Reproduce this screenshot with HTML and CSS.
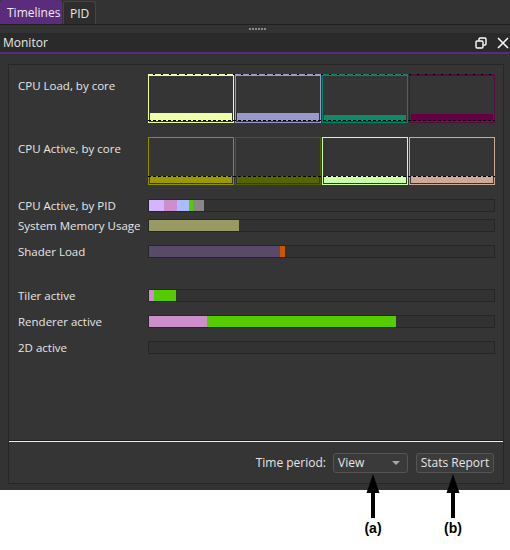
FILE: index.html
```html
<!DOCTYPE html>
<html>
<head>
<meta charset="utf-8">
<link rel="stylesheet" href="styles.css">
</head>
<body>
<div class="app">
  <div class="tabbar">
    <div class="tab active">Timelines</div>
    <div class="tab">PID</div>
  </div>
  <div class="splitter"><span class="grip"></span></div>
  <div class="dock-title">
    <span class="title">Monitor</span>
    <span class="dock-buttons">
      <svg class="icon" width="12" height="12" viewBox="0 0 12 12"><path d="M4 3.5V2.2a1.2 1.2 0 0 1 1.2-1.2h4.6A1.2 1.2 0 0 1 11 2.2v4.6A1.2 1.2 0 0 1 9.8 8H8.5" fill="none" stroke="#fff" stroke-width="1.4"/><rect x="1" y="4" width="7" height="7" rx="1.2" fill="none" stroke="#fff" stroke-width="1.4"/></svg>
      <svg class="icon" width="12" height="12" viewBox="0 0 12 12"><path d="M1 1L11 11M11 1L1 11" stroke="#fff" stroke-width="1.5" fill="none"/></svg>
    </span>
  </div>
  <div class="dock-body">
    <div class="frame">
      <div class="content">
        <div class="row core-row">
          <div class="label core-label">CPU Load, by core</div>
          <div class="cores load">
            <div class="core c-yellow"><div class="fill" style="height:8px"></div></div>
            <div class="core c-lavender"><div class="fill" style="height:8px"></div></div>
            <div class="core c-teal"><div class="fill" style="height:6px"></div></div>
            <div class="core c-maroon"><div class="fill" style="height:7px"></div></div>
          </div>
        </div>
        <div class="row core-row second">
          <div class="label core-label">CPU Active, by core</div>
          <div class="cores active">
            <div class="core c-olive"><div class="fill" style="height:7px"></div></div>
            <div class="core c-moss"><div class="fill" style="height:7px"></div></div>
            <div class="core c-mint"><div class="fill" style="height:7px"></div></div>
            <div class="core c-tan"><div class="fill" style="height:7px"></div></div>
          </div>
        </div>
        <div class="row bar-row gap-13">
          <div class="label">CPU Active, by PID</div>
          <div class="bar">
            <span class="seg s-lilac" style="width:15px"></span>
            <span class="seg s-pink" style="width:13px"></span>
            <span class="seg s-blue" style="width:12px"></span>
            <span class="seg s-green" style="width:4px"></span>
            <span class="seg s-gray" style="width:11px"></span>
          </div>
        </div>
        <div class="row bar-row gap-7">
          <div class="label">System Memory Usage</div>
          <div class="bar"><span class="seg s-khaki" style="width:90px"></span></div>
        </div>
        <div class="row bar-row gap-13">
          <div class="label">Shader Load</div>
          <div class="bar">
            <span class="seg s-plum" style="width:131px"></span>
            <span class="seg s-orange" style="width:5px"></span>
          </div>
        </div>
        <div class="row bar-row gap-31">
          <div class="label">Tiler active</div>
          <div class="bar">
            <span class="seg s-pink" style="width:5px"></span>
            <span class="seg s-green" style="width:22px"></span>
          </div>
        </div>
        <div class="row bar-row gap-13">
          <div class="label">Renderer active</div>
          <div class="bar">
            <span class="seg s-pink" style="width:58px"></span>
            <span class="seg s-green" style="width:189px"></span>
          </div>
        </div>
        <div class="row bar-row gap-13">
          <div class="label">2D active</div>
          <div class="bar"></div>
        </div>
      </div>
      <div class="divider"></div>
      <div class="footer">
        <span class="footer-label">Time period:</span>
        <div class="dropdown"><span>View</span><span class="caret"></span></div>
        <div class="button">Stats Report</div>
      </div>
    </div>
  </div>
</div>
<div class="annotation ann-a">
  <svg width="14" height="44" viewBox="0 0 14 44"><polygon points="7,0 13.5,19 0.5,19" fill="#000"/><rect x="5" y="17" width="4" height="27" fill="#000"/></svg>
  <span class="ann-label">(a)</span>
</div>
<div class="annotation ann-b">
  <svg width="14" height="44" viewBox="0 0 14 44"><polygon points="7,0 13.5,19 0.5,19" fill="#000"/><rect x="5" y="17" width="4" height="27" fill="#000"/></svg>
  <span class="ann-label">(b)</span>
</div>
</body>
</html>
```

FILE: styles.css
```css
* { box-sizing: border-box; }
html, body { margin: 0; padding: 0; }
body {
  background: #fff;
  width: 510px;
  height: 550px;
  position: relative;
  font-family: "Open Sans", "Noto Sans", sans-serif;
  font-size: 11.5px;
  color: #e6e6e6;
}
.app {
  width: 510px;
  height: 490px;
  background: #333333;
  display: flex;
  flex-direction: column;
}
.tabbar {
  height: 25px;
  display: flex;
  align-items: flex-end;
  border-bottom: 1px solid #1f1f1f;
  background: #333;
}
.tab {
  height: 23px;
  padding: 0 6px;
  display: flex;
  align-items: center;
  border: 1px solid #454545;
  border-bottom: none;
  border-radius: 3px 3px 0 0;
  background: #2d2d2d;
  margin-right: 1px;
  color: #e8e8e8;
  font-size: 12px;
}
.tab.active {
  height: 24px;
  background: #5b2c7c;
  border-color: #5b2c7c;
  width: 62px;
  color: #f0eaf4;
}
.splitter {
  height: 8px;
  display: flex;
  justify-content: center;
  align-items: center;
}
.grip {
  width: 17px;
  height: 2px;
  margin-left: 4px;
  background: repeating-linear-gradient(90deg, #8a8a8a 0 2px, transparent 2px 3px);
}
.dock-title {
  height: 21px;
  background: #2a2a2a;
  border-bottom: 2px solid #5a2b7b;
  display: flex;
  align-items: center;
  justify-content: space-between;
  padding: 0 1px 0 3px;
  font-size: 12px;
  color: #e8e8e8;
}
.dock-buttons {
  display: flex;
  gap: 10px;
  align-items: center;
}
.icon { display: block; }
.dock-body {
  flex: 1;
  padding: 10px 6px 6px 8px;
  display: flex;
}
.frame {
  flex: 1;
  border: 1px solid #272727;
  background: #353535;
  display: flex;
  flex-direction: column;
}
.content {
  flex: 1;
  padding: 9px 8px 0 9px;
}
.row {
  display: grid;
  grid-template-columns: 130px 1fr;
}
.label {
  white-space: nowrap;
  line-height: 13px;
}
.core-row { height: 49px; }
.core-row.second { height: 48px; margin-top: 14px; }
.core-label { padding-top: 5px; }
.cores {
  position: relative;
  display: grid;
  grid-template-columns: repeat(4, 1fr);
  column-gap: 1px;
}
.core {
  border: 1px solid var(--c);
  padding: 1px;
  display: flex;
  flex-direction: column;
  justify-content: flex-end;
}
.load .core { border-top-width: 2px; }
.fill { background: var(--f, var(--c)); }
.cores::after {
  content: "";
  position: absolute;
  left: 0;
  right: 0;
  height: 1px;
  background: repeating-linear-gradient(90deg, #000 0 3px, transparent 3px 5px);
}
.load::after { bottom: 2px; }
.active::after { bottom: 8px; }
.load::before {
  content: "";
  position: absolute;
  left: 0;
  right: 0;
  top: 0;
  height: 1px;
  z-index: 1;
  background: repeating-linear-gradient(90deg, transparent 0 5px, #000 5px 7px, transparent 7px 8px);
}
.c-yellow { --c: #eeffaa; }
.c-lavender { --c: #9999cc; }
.c-teal { --c: #008866; --f: #118866; }
.c-maroon { --c: #550f3f; --f: #660044; }
.c-olive { --c: #8f8f00; --f: #999900; }
.c-moss { --c: #4f5e00; --f: #556600; }
.c-mint { --c: #ccffaa; }
.c-tan { --c: #ccaa99; }

.bar-row { height: 13px; align-items: center; }
.bar-row .label { padding-top: 1px; }
.gap-7 { margin-top: 7px; }
.gap-13 { margin-top: 13px; }
.gap-31 { margin-top: 31px; }
.bar {
  height: 13px;
  border: 1px solid #262626;
  background: #323232;
  display: flex;
}
.seg { display: block; height: 100%; }
.s-lilac { background: #d4b3ff; }
.s-pink { background: #cc8fcc; }
.s-blue { background: #aabbff; }
.s-green { background: #55cc00; }
.s-gray { background: #888888; }
.s-khaki { background: #999966; }
.s-plum { background: #5a4a6a; }
.s-orange { background: #cc5500; }

.divider {
  height: 2px;
  border-top: 1px solid #1e1e1e;
  background: #f0f0f0;
}
.footer {
  height: 41px;
  display: flex;
  align-items: center;
  justify-content: flex-end;
  padding-right: 9px;
  font-size: 12px;
}
.footer-label { margin-right: 7px; }
.dropdown {
  width: 75px;
  height: 20px;
  border: 1px solid #555;
  border-radius: 3px;
  background: #3a3a3a;
  display: flex;
  align-items: center;
  justify-content: space-between;
  padding: 0 7px 0 4px;
  margin-right: 8px;
}
.caret {
  width: 0;
  height: 0;
  border-left: 4px solid transparent;
  border-right: 4px solid transparent;
  border-top: 4px solid #a8a8a8;
}
.button {
  width: 78px;
  height: 20px;
  border: 1px solid #555;
  border-radius: 3px;
  background: #3c3c3c;
  display: flex;
  align-items: center;
  justify-content: center;
}
.annotation {
  position: absolute;
  top: 474px;
  width: 30px;
  display: flex;
  flex-direction: column;
  align-items: center;
}
.annotation svg { display: block; }
.ann-a { left: 358px; }
.ann-b { left: 438px; }
.ann-label {
  font-family: "Liberation Sans", Arial, sans-serif;
  font-weight: bold;
  font-size: 14px;
  color: #000;
  line-height: 16px;
  margin-top: 2px;
}
```
